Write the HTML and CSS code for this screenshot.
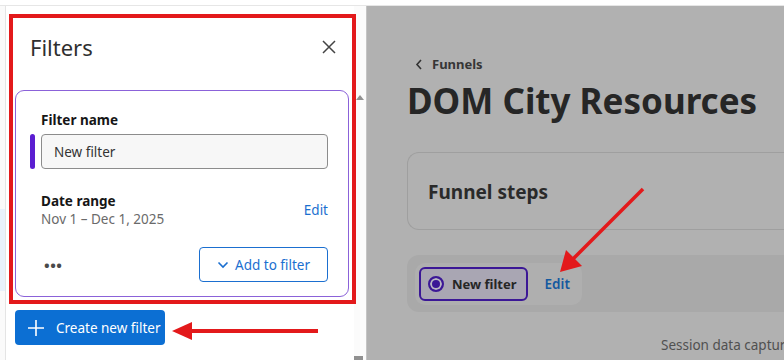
FILE: index.html
```html
<!DOCTYPE html>
<html lang="en">
<head>
    <meta charset="UTF-8">
    <meta name="viewport" content="width=device-width, initial-scale=1.0">
    <title>Funnels - Filters</title>
    <link rel="stylesheet" href="styles.css">
</head>
<body>

    <div class="topbar"></div>

    <div class="app">
        <div class="gutter"><div class="gutter-mark"></div></div>

        <aside class="panel">
            <div class="panel-head">
                <h2>Filters</h2>
                <button class="close" aria-label="Close">
                    <svg width="14" height="14" viewBox="0 0 14 14"><path d="M1 1L13 13M13 1L1 13" stroke="#444" stroke-width="1.5" fill="none"/></svg>
                </button>
            </div>

            <div class="card">
                <label class="field-label">Filter name</label>
                <div class="field-row">
                    <span class="field-bar"></span>
                    <input type="text" class="field" value="New filter">
                </div>

                <div class="date-row">
                    <div>
                        <div class="field-label">Date range</div>
                        <div class="date-value">Nov 1 – Dec 1, 2025</div>
                    </div>
                    <a href="#" class="link">Edit</a>
                </div>

                <div class="card-foot">
                    <span class="dots">•••</span>
                    <button class="btn-outline">
                        <svg width="12" height="8" viewBox="0 0 12 8"><path d="M1.5 1.5L6 6L10.5 1.5" stroke="#1b6fd0" stroke-width="1.6" fill="none"/></svg>
                        Add to filter
                    </button>
                </div>
            </div>

            <button class="btn-primary">
                <svg width="18" height="18" viewBox="0 0 18 18"><path d="M9 1V17M1 9H17" stroke="#fff" stroke-width="1.6" fill="none"/></svg>
                Create new filter
            </button>

            <div class="scrollbar">
                <span class="arrow-up"></span>
                <span class="arrow-down"></span>
            </div>

            <div class="callout-box"></div>
        </aside>

        <main class="main">
            <a href="#" class="back">
                <svg width="8" height="11" viewBox="0 0 8 11"><path d="M6 1L2 5.5L6 10" stroke="#333" stroke-width="1.6" fill="none"/></svg>
                Funnels
            </a>
            <h1>DOM City Resources</h1>

            <div class="steps">Funnel steps</div>

            <div class="filter-strip">
                <div class="filter-pill">
                    <span class="chip">
                        <span class="radio"></span>
                        New filter
                    </span>
                    <a href="#" class="chip-edit">Edit</a>
                </div>
            </div>

            <p class="note">Session data captured</p>
        </main>
    </div>

    <svg class="arrows" width="784" height="360" viewBox="0 0 784 360">
        <path d="M318 331H188" stroke="#e3191b" stroke-width="4"/>
        <path d="M172 331L192 322V340Z" fill="#e3191b"/>
        <path d="M643 189L572 260" stroke="#e3191b" stroke-width="3.5"/>
        <path d="M560 272L566 250L582 266Z" fill="#e3191b"/>
    </svg>

</body>
</html>
```

FILE: styles.css
```css
* { box-sizing: border-box; }
body { margin: 0; width: 784px; height: 360px; overflow: hidden; font-family: "Noto Sans", "Open Sans", sans-serif; color: #262626; background: #fff; position: relative; }
button { font-family: inherit; }

.topbar { height: 6px; background: #fff; border-bottom: 1px solid #e6e6e6; }
.app { display: flex; height: 354px; }

.gutter { width: 6px; background: #fafafa; border-right: 1px solid #e4e4e4; padding-top: 203px; }
.gutter-mark { height: 82px; background: #e9f1fb; }

.panel { width: 360px; background: #fff; position: relative; padding: 0 0 0 9px; }
.panel-head { display: flex; justify-content: space-between; align-items: flex-start; padding: 25px 30px 0 15px; height: 84px; }
.panel-head h2 { margin: 0; font-size: 22px; font-weight: 400; color: #2f2f2f; line-height: 32px; }
.close { background: none; border: none; padding: 0; margin-top: 9px; cursor: pointer; display: flex; }

.card { width: 334px; border: 1px solid #8b62d9; border-radius: 9px; padding: 17px 20px 14px 25px; }
.field-label { font-size: 13.5px; font-weight: 700; color: #161616; line-height: 18px; }
.field-row { position: relative; margin-top: 4px; }
.field-bar { position: absolute; left: -11px; top: 0; width: 5px; height: 35px; border-radius: 3px; background: #5b1ed1; }
.field { width: 100%; height: 35px; border: 1px solid #8c8c8c; border-radius: 4px; background: #f7f7f7; padding: 0 12px; font-family: inherit; font-size: 13.5px; color: #333; }

.date-row { display: flex; justify-content: space-between; align-items: center; margin-top: 23px; }
.date-value { font-size: 13.5px; color: #6a6a6a; line-height: 18px; }
.link { color: #1b6fd0; font-size: 13.5px; text-decoration: none; }

.card-foot { display: flex; justify-content: space-between; align-items: center; margin-top: 19px; padding-left: 3px; }
.dots { font-size: 15px; font-weight: 700; color: #4a4a4a; letter-spacing: 0.5px; }
.btn-outline { display: flex; align-items: center; gap: 6px; width: 129px; height: 35px; justify-content: center; background: #fff; border: 1px solid #1b6fd0; border-radius: 4px; color: #1b6fd0; font-size: 13.5px; cursor: pointer; }

.btn-primary { display: flex; align-items: center; gap: 11px; margin-top: 13px; height: 35px; padding: 0 4px 0 12px; background: #0c6fd3; color: #fff; border: none; border-radius: 4px; font-size: 13.5px; white-space: nowrap; cursor: pointer; }

.scrollbar { position: absolute; right: 0; top: 0; bottom: 0; width: 12px; background: #fbfbfb; }
.arrow-up { position: absolute; left: 2px; top: 89px; border-left: 4px solid transparent; border-right: 4px solid transparent; border-bottom: 5px solid #909090; }
.arrow-down { position: absolute; left: 0; bottom: 0; width: 9px; height: 4px; background: #909090; }

.callout-box { position: absolute; left: 3px; top: 8px; width: 347px; height: 290px; border: 4px solid #e3191b; }

.main { flex: 1; background: #b1b1b1; border-left: 1px solid #c4c4c4; padding: 49px 0 0 40px; overflow: hidden; }
.back { display: flex; align-items: center; gap: 9px; margin-left: 8px; color: #363636; font-size: 13px; font-weight: 700; text-decoration: none; }
.main h1 { margin: 5px 0 0; font-size: 35px; font-weight: 700; color: #262626; line-height: 46px; letter-spacing: 0; white-space: nowrap; }

.steps { margin-top: 28px; height: 78px; width: 420px; border: 1px solid #9f9f9f; border-right: none; border-radius: 12px 0 0 12px; padding: 26px 0 0 20px; font-size: 19px; font-weight: 700; color: #2a2a2a; }

.filter-strip { margin-top: 25px; width: 420px; height: 57px; background: #a9a9a9; border-radius: 12px 0 0 12px; padding: 8px 0 0 8px; }
.filter-pill { display: inline-flex; align-items: center; gap: 17px; height: 42px; padding: 0 12px 0 4px; background: #afafaf; border-radius: 10px; }
.chip { display: flex; align-items: center; gap: 8px; height: 34px; padding: 0 9px 0 7px; border: 2px solid #3b1796; border-radius: 6px; background: #a9a6b3; font-size: 13px; font-weight: 700; color: #262626; }
.radio { width: 16px; height: 16px; border-radius: 50%; border: 2px solid #3b1796; background: #3b1796; box-shadow: inset 0 0 0 2px #b9b6c3; }
.chip-edit { color: #14599f; font-size: 13.5px; font-weight: 600; text-decoration: none; }

.note { margin: 24px 0 0 254px; font-size: 13.5px; color: #505050; white-space: nowrap; }

.arrows { position: absolute; left: 0; top: 0; pointer-events: none; }
```
